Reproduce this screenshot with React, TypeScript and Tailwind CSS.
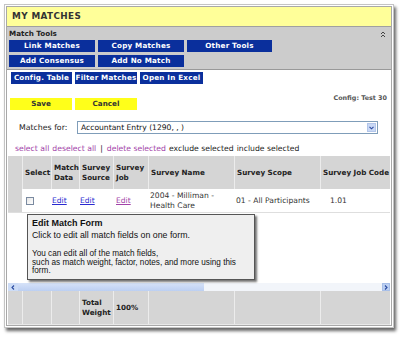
import React from "react";

const cols = "grid grid-cols-[14px_29px_28px_34px_35px_86px_86px_90px]";

function BlueButton({ label, w }: { label: string; w: string }) {
  return (
    <div
      className={`${w} h-[12px] bg-[#0a2f9c] text-white font-bold text-[7.2px] leading-[12px] text-center tracking-[0.2px]`}
    >
      {label}
    </div>
  );
}

function YellowButton({ label }: { label: string }) {
  return (
    <div className="w-[62px] h-[12px] bg-[#ffff1a] text-[#333] font-bold text-[7.2px] leading-[12px] text-center">
      {label}
    </div>
  );
}

export default function App() {
  const heads = ["", "Select", "Match Data", "Survey Source", "Survey Job", "Survey Name", "Survey Scope", "Survey Job Code"];

  return (
    <div className="w-[400px] h-[338px] bg-white overflow-hidden font-['DejaVu_Sans',Verdana,sans-serif] text-[#222]">
      <div className="ml-[4px] mt-[4px] w-[390px] h-[324px] border border-[#c4c4c4] bg-white p-px shadow-[2px_3px_3px_rgba(0,0,0,0.6)]">
        <div className="h-full border border-[#a8a8a8] flex flex-col">
          {/* title */}
          <div className="h-[20px] bg-[#ffff99] border-b border-[#a0a0a0] pl-[5px] flex items-center">
            <span className="font-bold text-[8.8px] tracking-[0.4px] text-[#333]">MY MATCHES</span>
          </div>

          {/* match tools */}
          <div className="h-[43px] bg-[#cccccc] border-b border-[#999] pl-[2px] relative">
            <div className="text-[7.2px] font-bold leading-[11px] h-[11px] mt-px">Match Tools</div>
            <svg className="absolute right-[5px] top-[4px]" width="6" height="7" viewBox="0 0 6 7">
              <path d="M1 3 L3 1 L5 3 M1 6 L3 4 L5 6" stroke="#444" strokeWidth="1" fill="none" />
            </svg>
            <div className="flex gap-[3px] mt-[1px]">
              <BlueButton label="Link Matches" w="w-[86px]" />
              <BlueButton label="Copy Matches" w="w-[86px]" />
              <BlueButton label="Other Tools" w="w-[85px]" />
            </div>
            <div className="flex gap-[3px] mt-[3px]">
              <BlueButton label="Add Consensus" w="w-[86px]" />
              <BlueButton label="Add No Match" w="w-[86px]" />
            </div>
          </div>

          <div className="flex gap-[3px] mt-[2px] pl-[4px]">
            <BlueButton label="Config. Table" w="w-[61px]" />
            <BlueButton label="Filter Matches" w="w-[62px]" />
            <BlueButton label="Open In Excel" w="w-[63px]" />
          </div>

          <div className="flex mt-[14px] pl-[3px] pr-[4px]">
            <div className="flex gap-[3px]">
              <YellowButton label="Save" />
              <YellowButton label="Cancel" />
            </div>
            <div className="ml-auto -mt-[4px] h-[8px] text-[6.4px] leading-[8px] font-bold text-[#555]">
              Config: Test 30
            </div>
          </div>

          <div className="flex items-center mt-[11px] pl-[12px] h-[13px]">
            <span className="text-[7.8px] w-[58px]">Matches for:</span>
            <div className="w-[301px] h-[13px] border border-[#7f9db9] bg-white flex items-center pl-[3px] relative">
              <span className="text-[7.6px] text-[#111]">Accountant Entry (1290, , )</span>
              <div className="absolute right-px top-px w-[9px] h-[9px] bg-[#c9d8f5] border border-[#b3c6ea] flex items-center justify-center">
                <svg width="5" height="4" viewBox="0 0 5 4">
                  <path d="M0.5 0.8 L2.5 2.8 L4.5 0.8" stroke="#2a4aa0" strokeWidth="1.1" fill="none" />
                </svg>
              </div>
            </div>
          </div>

          <div className="mt-[10px] pl-[8px] h-[10px] text-[7.7px] leading-[10px] whitespace-nowrap">
            <span className="text-[#a243a8]">select all</span>
            <span className="text-[#a243a8] ml-[3px]">deselect all</span>
            <span className="text-[#222] ml-[4px]">|</span>
            <span className="text-[#a243a8] ml-[4px]">delete selected</span>
            <span className="text-[#222] ml-[3px]">exclude selected</span>
            <span className="text-[#222] ml-[3px]">include selected</span>
          </div>

          {/* table */}
          <div className="mt-[2px] ml-px w-[382px] flex-1 flex flex-col overflow-hidden relative">
            <div className={`${cols} h-[33px] bg-[#d5d5d5]`}>
              {heads.map((h, i) => (
                <div
                  key={i}
                  className={`flex items-center pl-[2px] text-[7.2px] font-bold leading-[10px] whitespace-nowrap ${i > 0 ? "border-l border-[#ececec]" : ""}`}
                >
                  {h === "Match Data" || h === "Survey Source" || h === "Survey Job" ? (
                    <span>
                      {h.split(" ")[0]}
                      <br />
                      {h.split(" ")[1]}
                    </span>
                  ) : (
                    h
                  )}
                </div>
              ))}
            </div>

            <div className={`${cols} h-[24px] border-b border-[#dedede] text-[7.6px] leading-[10px]`}>
              <div className="bg-[#d5d5d5]" />
              <div className="flex items-center pl-[4px]">
                <div className="w-[8px] h-[8px] border border-[#7a8aa0] bg-gradient-to-br from-[#e6e6e6] to-white" />
              </div>
              <div className="flex items-center pl-px">
                <span className="text-[#2a2ad0] underline">Edit</span>
              </div>
              <div className="flex items-center pl-px">
                <span className="text-[#2a2ad0] underline">Edit</span>
              </div>
              <div className="flex items-center pl-[3px]">
                <span className="text-[#a243a8] underline">Edit</span>
              </div>
              <div className="flex items-center pl-[2px] text-[#333]">
                <span>
                  2004 - Milliman -
                  <br />
                  Health Care
                </span>
              </div>
              <div className="flex items-center pl-[2px] text-[#333] whitespace-nowrap">01 - All Participants</div>
              <div className="flex items-center pl-[10px] text-[#333]">1.01</div>
            </div>

            <div className="h-[70px] bg-white" />

            {/* scrollbar */}
            <div className="h-[8px] flex bg-[#f2f5fa] relative">
              <div className="w-[10px] flex items-center justify-center bg-[#cddcf6]">
                <svg width="4" height="5" viewBox="0 0 4 5">
                  <path d="M3 0.5 L1 2.5 L3 4.5" stroke="#2a4aa0" strokeWidth="1.1" fill="none" />
                </svg>
              </div>
              <div className="w-[186px] bg-gradient-to-b from-[#d6e2f8] to-[#bccff2]" />
              <div className="ml-auto w-[8px] bg-[#bcd0f2] border border-[#a8bfe8] flex items-center justify-center">
                <svg width="4" height="5" viewBox="0 0 4 5">
                  <path d="M1 0.5 L3 2.5 L1 4.5" stroke="#2a4aa0" strokeWidth="1.1" fill="none" />
                </svg>
              </div>
            </div>

            <div className={`${cols} flex-1 bg-[#d5d5d5] border-b border-[#e8e8e8]`}>
              {heads.map((_, i) => (
                <div
                  key={i}
                  className={`flex items-center pl-[2px] text-[7.2px] font-bold leading-[10px] ${i > 0 ? "border-l border-[#ececec]" : ""}`}
                >
                  {i === 3 && (
                    <span>
                      Total
                      <br />
                      Weight
                    </span>
                  )}
                  {i === 4 && <span>100%</span>}
                </div>
              ))}
            </div>

            {/* tooltip */}
            <div className="absolute left-[19px] top-[58px] w-[228px] h-[66px] bg-[#efefef] border border-[#555] shadow-[2px_2px_2px_rgba(0,0,0,0.55)] pl-[4px] pt-[3px] font-['Liberation_Sans',Arial,sans-serif] text-[#111]">
              <div className="font-bold text-[9px] leading-[11px]">Edit Match Form</div>
              <div className="text-[8.8px] leading-[12px]">Click to edit all match fields on one form.</div>
              <div className="text-[8.2px] leading-[8.5px] mt-[9px] whitespace-nowrap">
                You can edit all of the match fields,
                <br />
                such as match weight, factor, notes, and more using this
                <br />
                form.
              </div>
            </div>
          </div>
        </div>
      </div>
    </div>
  );
}
